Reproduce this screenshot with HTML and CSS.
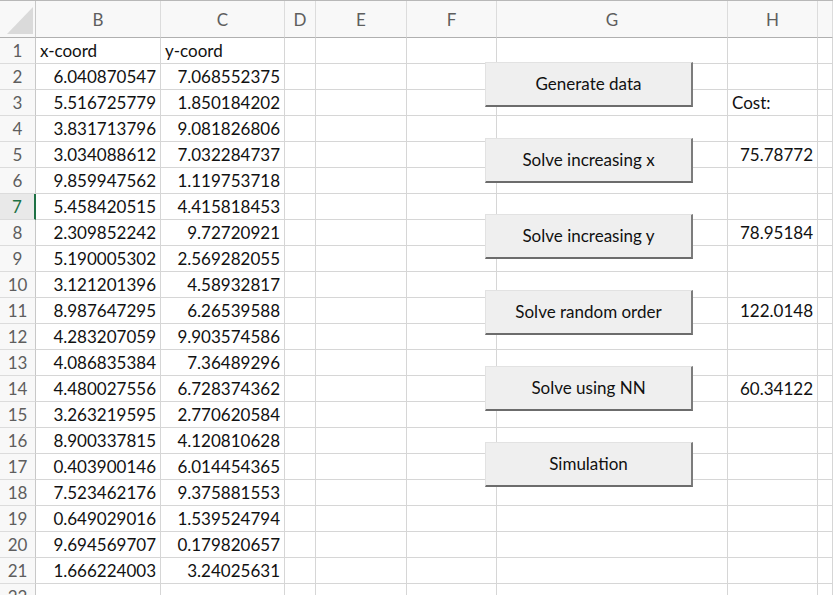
FILE: index.html
```html
<!DOCTYPE html>
<html>
<head>
<meta charset="utf-8">
<link rel="stylesheet" href="styles.css">
</head>
<body>
<div class="sheet">
  <div class="grid">
    <div class="corner"><span class="tri"></span></div>
    <div class="ch">B</div><div class="ch">C</div><div class="ch">D</div><div class="ch">E</div><div class="ch">F</div><div class="ch">G</div><div class="ch">H</div><div class="ch last"></div>

    <div class="rh">1</div><div class="c">x-coord</div><div class="c">y-coord</div><div class="c"></div><div class="c"></div><div class="c"></div><div class="c"></div><div class="c"></div><div class="c"></div>
    <div class="rh">2</div><div class="c n">6.040870547</div><div class="c n">7.068552375</div><div class="c"></div><div class="c"></div><div class="c"></div><div class="c"></div><div class="c"></div><div class="c"></div>
    <div class="rh">3</div><div class="c n">5.516725779</div><div class="c n">1.850184202</div><div class="c"></div><div class="c"></div><div class="c"></div><div class="c"></div><div class="c">Cost:</div><div class="c"></div>
    <div class="rh">4</div><div class="c n">3.831713796</div><div class="c n">9.081826806</div><div class="c"></div><div class="c"></div><div class="c"></div><div class="c"></div><div class="c"></div><div class="c"></div>
    <div class="rh">5</div><div class="c n">3.034088612</div><div class="c n">7.032284737</div><div class="c"></div><div class="c"></div><div class="c"></div><div class="c"></div><div class="c n">75.78772</div><div class="c"></div>
    <div class="rh">6</div><div class="c n">9.859947562</div><div class="c n">1.119753718</div><div class="c"></div><div class="c"></div><div class="c"></div><div class="c"></div><div class="c"></div><div class="c"></div>
    <div class="rh sel">7</div><div class="c n">5.458420515</div><div class="c n">4.415818453</div><div class="c"></div><div class="c"></div><div class="c"></div><div class="c"></div><div class="c"></div><div class="c"></div>
    <div class="rh">8</div><div class="c n">2.309852242</div><div class="c n">9.72720921</div><div class="c"></div><div class="c"></div><div class="c"></div><div class="c"></div><div class="c n">78.95184</div><div class="c"></div>
    <div class="rh">9</div><div class="c n">5.190005302</div><div class="c n">2.569282055</div><div class="c"></div><div class="c"></div><div class="c"></div><div class="c"></div><div class="c"></div><div class="c"></div>
    <div class="rh">10</div><div class="c n">3.121201396</div><div class="c n">4.58932817</div><div class="c"></div><div class="c"></div><div class="c"></div><div class="c"></div><div class="c"></div><div class="c"></div>
    <div class="rh">11</div><div class="c n">8.987647295</div><div class="c n">6.26539588</div><div class="c"></div><div class="c"></div><div class="c"></div><div class="c"></div><div class="c n">122.0148</div><div class="c"></div>
    <div class="rh">12</div><div class="c n">4.283207059</div><div class="c n">9.903574586</div><div class="c"></div><div class="c"></div><div class="c"></div><div class="c"></div><div class="c"></div><div class="c"></div>
    <div class="rh">13</div><div class="c n">4.086835384</div><div class="c n">7.36489296</div><div class="c"></div><div class="c"></div><div class="c"></div><div class="c"></div><div class="c"></div><div class="c"></div>
    <div class="rh">14</div><div class="c n">4.480027556</div><div class="c n">6.728374362</div><div class="c"></div><div class="c"></div><div class="c"></div><div class="c"></div><div class="c n">60.34122</div><div class="c"></div>
    <div class="rh">15</div><div class="c n">3.263219595</div><div class="c n">2.770620584</div><div class="c"></div><div class="c"></div><div class="c"></div><div class="c"></div><div class="c"></div><div class="c"></div>
    <div class="rh">16</div><div class="c n">8.900337815</div><div class="c n">4.120810628</div><div class="c"></div><div class="c"></div><div class="c"></div><div class="c"></div><div class="c"></div><div class="c"></div>
    <div class="rh">17</div><div class="c n">0.403900146</div><div class="c n">6.014454365</div><div class="c"></div><div class="c"></div><div class="c"></div><div class="c"></div><div class="c"></div><div class="c"></div>
    <div class="rh">18</div><div class="c n">7.523462176</div><div class="c n">9.375881553</div><div class="c"></div><div class="c"></div><div class="c"></div><div class="c"></div><div class="c"></div><div class="c"></div>
    <div class="rh">19</div><div class="c n">0.649029016</div><div class="c n">1.539524794</div><div class="c"></div><div class="c"></div><div class="c"></div><div class="c"></div><div class="c"></div><div class="c"></div>
    <div class="rh">20</div><div class="c n">9.694569707</div><div class="c n">0.179820657</div><div class="c"></div><div class="c"></div><div class="c"></div><div class="c"></div><div class="c"></div><div class="c"></div>
    <div class="rh">21</div><div class="c n">1.666224003</div><div class="c n">3.24025631</div><div class="c"></div><div class="c"></div><div class="c"></div><div class="c"></div><div class="c"></div><div class="c"></div>
    <div class="rh">22</div><div class="c"></div><div class="c"></div><div class="c"></div><div class="c"></div><div class="c"></div><div class="c"></div><div class="c"></div><div class="c"></div>
  </div>
  <div class="buttons">
    <button class="btn">Generate data</button>
    <button class="btn">Solve increasing x</button>
    <button class="btn">Solve increasing y</button>
    <button class="btn">Solve random order</button>
    <button class="btn">Solve using NN</button>
    <button class="btn">Simulation</button>
  </div>
</div>
</body>
</html>
```
FILE: styles.css
```css
html, body {
  margin: 0;
  padding: 0;
  background: #ffffff;
  overflow: hidden;
}
body {
  width: 833px;
  height: 595px;
  font-family: Lato, "Open Sans", sans-serif;
  font-size: 17px;
  color: #1b1b1b;
}
.sheet {
  position: relative;
  width: 833px;
  height: 595px;
  overflow: hidden;
}
.grid {
  display: grid;
  grid-template-columns: 36px 125px 124px 31px 91px 90px 231px 90px 1fr;
  grid-template-rows: 37px repeat(22, 26px);
  border-top: 1px solid #b8b8b8;
}
.grid > div {
  box-sizing: border-box;
  border-right: 1px solid #d6d6d6;
  border-bottom: 1px solid #d6d6d6;
  white-space: nowrap;
  overflow: hidden;
}
.corner {
  position: relative;
  background: #f8f8f8;
  border-bottom-color: #b0b0b0 !important;
  border-right-color: #c8c8c8 !important;
}
.tri {
  position: absolute;
  right: 2px;
  bottom: 3px;
  width: 0;
  height: 0;
  border-left: 26px solid transparent;
  border-bottom: 27px solid #dadada;
}
.ch {
  background: #f8f8f8;
  border-bottom-color: #b0b0b0 !important;
  border-right-color: #dcdcdc !important;
  color: #5e5e5e;
  display: flex;
  align-items: center;
  justify-content: center;
  padding-top: 1px;
}
.rh {
  background: #f8f8f8;
  color: #5e5e5e;
  display: flex;
  align-items: center;
  justify-content: center;
  border-right-color: #c8c8c8 !important;
  border-bottom-color: #dcdcdc !important;
}
.rh.sel {
  background: #e9e9e9;
  color: #1e7145;
  border-right: 2px solid #1e7145 !important;
}
.c {
  display: flex;
  align-items: center;
  padding: 0 4px 0 4px;
  color: #111111;
}
.c.n {
  justify-content: flex-end;
}
.buttons {
  position: absolute;
  left: 485px;
  top: 62px;
  display: flex;
  flex-direction: column;
  gap: 31px;
}
.btn {
  box-sizing: border-box;
  width: 208px;
  height: 45px;
  margin: 0;
  padding: 0 0 2px 0;
  background: #efefef;
  border-top: 1px solid #e2e2e2;
  border-left: 1px solid #e2e2e2;
  border-right: 2px solid #7c7c7c;
  border-bottom: 2px solid #6c6c6c;
  border-radius: 0;
  font-family: Lato, "Open Sans", sans-serif;
  font-size: 17px;
  color: #111111;
}
```
